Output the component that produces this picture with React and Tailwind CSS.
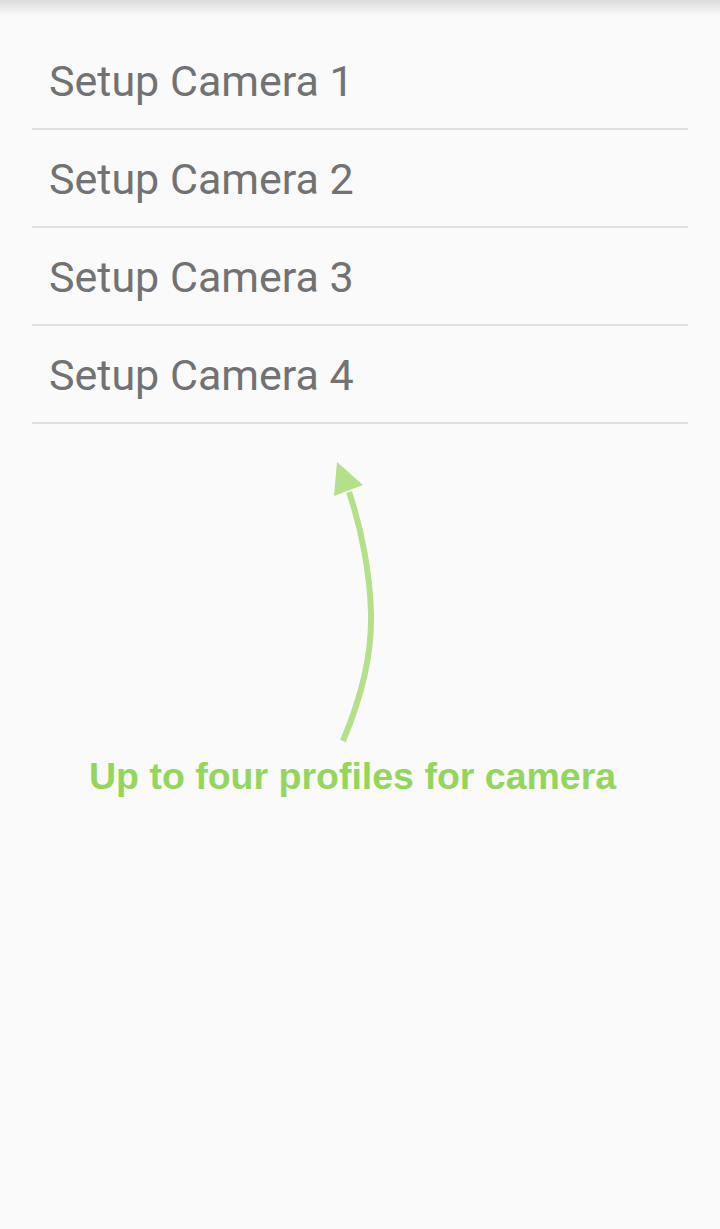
const cameras = ['Setup Camera 1', 'Setup Camera 2', 'Setup Camera 3', 'Setup Camera 4']

function CurvedArrow() {
  return (
    <svg width="720" height="330" viewBox="0 424 720 330" className="block">
      <path
        d="M343 741 C 362 695, 372 655, 371 613 C 370 575, 362 530, 349 492"
        fill="none"
        stroke="#b5e08a"
        strokeWidth="6"
      />
      <polygon points="337,462 334,496 363,485" fill="#b5e08a" />
    </svg>
  )
}

export default function App() {
  return (
    <div className="relative min-h-[1229px] w-[720px] bg-[#fafafa]">
      <div className="h-4 bg-gradient-to-b from-[#dcdcdc] to-[#fafafa]" />
      <ul className="mx-8 mt-[16px]">
        {cameras.map((c) => (
          <li
            key={c}
            className="flex h-[98px] items-center border-b-2 border-[#e0e0e0] pl-[17px] pt-[2px] text-[43px] text-[#727272]"
            style={{ fontFamily: 'Roboto, sans-serif' }}
          >
            {c}
          </li>
        ))}
      </ul>
      <CurvedArrow />
      <p
        className="mt-[4px] pl-[89px] text-[37.5px] font-bold leading-none text-[#93d65c]"
        style={{ fontFamily: '"Liberation Sans", Arial, sans-serif' }}
      >
        Up to four profiles for camera
      </p>
    </div>
  )
}
